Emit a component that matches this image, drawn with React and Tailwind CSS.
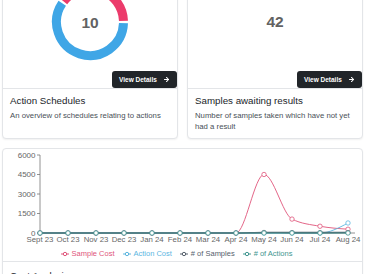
import { ArrowRight } from 'lucide-react'

const months = ['Sept 23', 'Oct 23', 'Nov 23', 'Dec 23', 'Jan 24', 'Feb 24', 'Mar 24', 'Apr 24', 'May 24', 'Jun 24', 'Jul 24', 'Aug 24']

const series = [
  { name: 'Sample Cost', color: '#e0557b', data: [0, 0, 0, 0, 0, 0, 0, 0, 4500, 1070, 520, 290] },
  { name: 'Action Cost', color: '#5cb6df', data: [0, 0, 0, 0, 0, 0, 0, 0, 0, 0, 0, 770] },
  { name: '# of Samples', color: '#56616d', data: [0, 0, 0, 0, 0, 0, 0, 0, 40, 30, 25, 35] },
  { name: '# of Actions', color: '#3f9690', data: [0, 0, 0, 0, 0, 0, 0, 0, 0, 0, 0, 0] },
]

const X0 = 37
const STEP = 28
const Y0 = 84
const yOf = (v) => Y0 - (v / 6000) * 78

function monotonePath(pts) {
  const n = pts.length
  const s = []
  for (let i = 0; i < n - 1; i++) s.push((pts[i + 1][1] - pts[i][1]) / (pts[i + 1][0] - pts[i][0]))
  const t = new Array(n).fill(0)
  for (let i = 1; i < n - 1; i++) {
    const h0 = pts[i][0] - pts[i - 1][0]
    const h1 = pts[i + 1][0] - pts[i][0]
    const s0 = s[i - 1]
    const s1 = s[i]
    const p = (s0 * h1 + s1 * h0) / (h0 + h1)
    t[i] = (Math.sign(s0) + Math.sign(s1)) * Math.min(Math.abs(s0), Math.abs(s1), 0.5 * Math.abs(p)) || 0
  }
  t[0] = (3 * s[0] - t[1]) / 2
  t[n - 1] = (3 * s[n - 2] - t[n - 2]) / 2
  let d = `M${pts[0][0]},${pts[0][1]}`
  for (let i = 0; i < n - 1; i++) {
    const dx = (pts[i + 1][0] - pts[i][0]) / 3
    d += `C${pts[i][0] + dx},${pts[i][1] + dx * t[i]},${pts[i + 1][0] - dx},${pts[i + 1][1] - dx * t[i + 1]},${pts[i + 1][0]},${pts[i + 1][1]}`
  }
  return d
}

function arc(cx, cy, r, a0, a1) {
  const rad = (a) => (a * Math.PI) / 180
  const x0 = cx + r * Math.sin(rad(a0))
  const y0 = cy - r * Math.cos(rad(a0))
  const x1 = cx + r * Math.sin(rad(a1))
  const y1 = cy - r * Math.cos(rad(a1))
  const large = a1 - a0 > 180 ? 1 : 0
  return `M${x0},${y0}A${r},${r},0,${large},1,${x1},${y1}`
}

function Donut() {
  return (
    <svg width="78" height="78" viewBox="0 0 78 78">
      <path d={arc(39, 39, 33.5, -52, 88)} fill="none" stroke="#ec3b6b" strokeWidth="9" />
      <path d={arc(39, 39, 33.5, 92, 304)} fill="none" stroke="#3fa6e6" strokeWidth="9" />
      <text x="39" y="44.5" textAnchor="middle" fontSize="15.5" fontWeight="600" fill="#626262" fontFamily="Liberation Sans, Arial, sans-serif">
        10
      </text>
    </svg>
  )
}

function ViewButton() {
  return (
    <button className="self-end mt-auto h-[17px] w-[65px] rounded-[3px] bg-[#212529] text-white text-[6.5px] font-bold flex items-center pl-[7px] gap-[6px]">
      View Details
      <ArrowRight size={7} strokeWidth={3.5} />
    </button>
  )
}

function StatCard({ visual, title, desc }) {
  return (
    <div className="rounded-[4px] border border-[#e3e5e8] bg-white shadow-[0_1px_2px_rgba(0,0,0,0.06)] flex flex-col">
      <div className="h-[118px] flex flex-col pt-[13px]">
        <div className="h-[78px] flex items-center justify-center">{visual}</div>
        <ViewButton />
      </div>
      <div className="h-[50px] border-t border-[#e3e5e8] pl-[7px] pr-[6px] pt-[5px]">
        <p className="text-[9.75px] leading-[13px] text-[#212529]">{title}</p>
        <p className="mt-[3px] text-[7.75px] leading-[11px] text-[#495057]">{desc}</p>
      </div>
    </div>
  )
}

function LegendIcon({ color }) {
  return (
    <svg width="8" height="8" viewBox="0 0 8 8">
      <line x1="0" y1="4" x2="8" y2="4" stroke={color} strokeWidth="1" />
      <circle cx="4" cy="4" r="1.7" fill="#fff" stroke={color} strokeWidth="1" />
    </svg>
  )
}

function CostChart() {
  const font = 'Liberation Sans, Arial, sans-serif'
  return (
    <svg width="360" height="96" viewBox="0 0 360 96" className="block">
      {[0, 1500, 3000, 4500, 6000].map((v) => (
        <g key={v}>
          <line x1="34" x2="37" y1={yOf(v)} y2={yOf(v)} stroke="#777" strokeWidth="0.8" />
          <text x="32.5" y={yOf(v) + 2.8} textAnchor="end" fontSize="8" fill="#666" fontFamily={font}>
            {v}
          </text>
        </g>
      ))}
      <line x1="37" x2="37" y1="6" y2={Y0} stroke="#777" strokeWidth="0.8" />
      <line x1="37" x2="352" y1={Y0} y2={Y0} stroke="#777" strokeWidth="0.8" />
      {months.map((m, i) => (
        <text key={m} x={X0 + i * STEP} y="93" textAnchor="middle" fontSize="7.8" fill="#666" fontFamily={font}>
          {m}
        </text>
      ))}
      {series.map((s) => {
        const pts = s.data.map((v, i) => [X0 + i * STEP, yOf(v)])
        return (
          <g key={s.name}>
            <path d={monotonePath(pts)} fill="none" stroke={s.color} strokeWidth={s.name === '# of Samples' ? 1.6 : 0.9} />
            {pts.map(([x, y], i) => (
              <circle key={i} cx={x} cy={y} r="2.2" fill="#fff" stroke={s.color} strokeWidth="0.8" />
            ))}
          </g>
        )
      })}
    </svg>
  )
}

export default function App() {
  return (
    <div className="h-[274px] w-[365px] overflow-hidden bg-white" style={{ fontFamily: 'Liberation Sans, Arial, sans-serif' }}>
      <div className="-mt-[31px] px-[2px]">
        <div className="grid grid-cols-2 gap-[9px]">
          <StatCard visual={<Donut />} title="Action Schedules" desc="An overview of schedules relating to actions" />
          <StatCard
            visual={<span className="text-[15.5px] font-semibold text-[#626262]">42</span>}
            title="Samples awaiting results"
            desc="Number of samples taken which have not yet had a result"
          />
        </div>
        <div className="mt-[9px] rounded-[4px] border border-[#e3e5e8] bg-white shadow-[0_1px_2px_rgba(0,0,0,0.06)]">
          <CostChart />
          <div className="mt-[3px] mb-[1px] h-[12px] flex items-center justify-center gap-[8px] pr-[12px] text-[7.5px]">
            {series.map((s) => (
              <div key={s.name} className="flex items-center gap-[3px]" style={{ color: s.color }}>
                <LegendIcon color={s.color} />
                <span>{s.name}</span>
              </div>
            ))}
          </div>
          <div className="border-t border-[#e3e5e8] pl-[7px] pt-[7px] pb-[8px]">
            <p className="text-[9.75px] leading-[13px] text-[#212529]">Cost Analysis</p>
          </div>
        </div>
      </div>
    </div>
  )
}
